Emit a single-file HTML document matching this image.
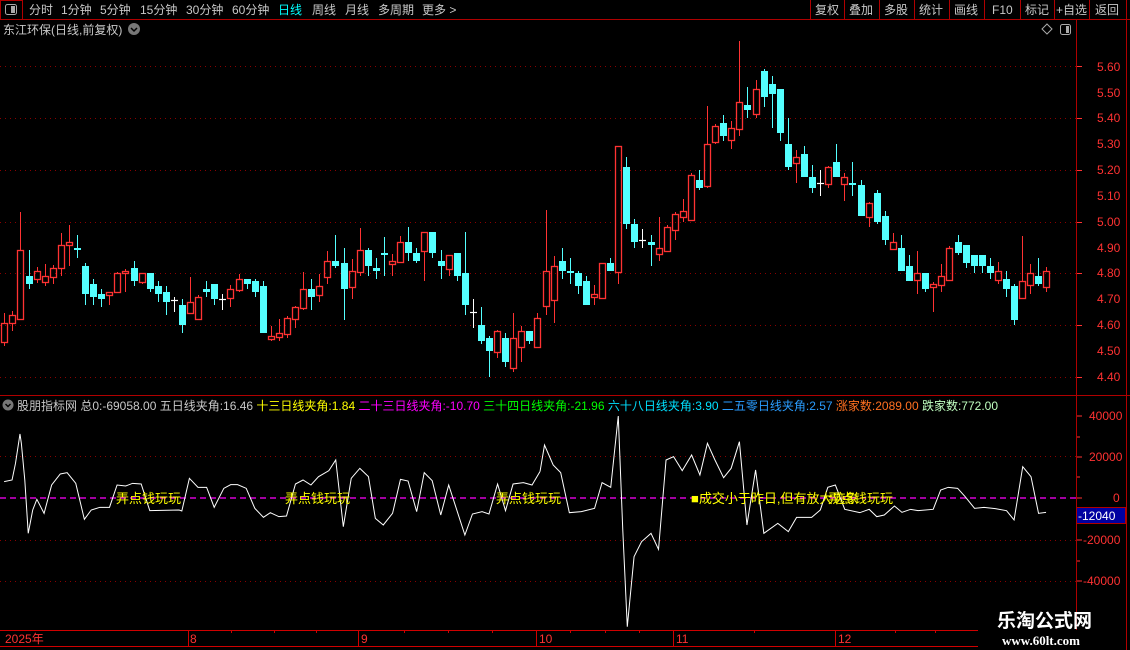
<!DOCTYPE html>
<html><head><meta charset="utf-8">
<style>
html,body{margin:0;padding:0;background:#000;width:1130px;height:650px;overflow:hidden}
svg{display:block}
text{font-family:"Liberation Sans","Noto Sans CJK SC",sans-serif;font-size:12px}
</style></head>
<body>
<svg id="s" width="1130" height="650" viewBox="0 0 1130 650" xmlns="http://www.w3.org/2000/svg">
<rect width="1130" height="650" fill="#000"/>
<line x1="0" y1="19.5" x2="1130" y2="19.5" stroke="#b00000"/>
<rect x="0.5" y="0.5" width="22" height="19" fill="none" stroke="#b00000"/>
<rect x="5.5" y="4.5" width="11" height="10" rx="2" fill="none" stroke="#aaa"/>
<rect x="11" y="6" width="4" height="7" fill="#aaa"/>
<g fill="#c8c8c8">
<text x="29" y="14">分时</text><text x="61" y="14">1分钟</text><text x="100" y="14">5分钟</text>
<text x="140" y="14">15分钟</text><text x="186" y="14">30分钟</text><text x="232" y="14">60分钟</text>
<text x="278" y="14" fill="#00ffff">日线</text><text x="312" y="14">周线</text><text x="345" y="14">月线</text>
<text x="378" y="14">多周期</text><text x="422" y="14">更多 &gt;</text>
</g>
<g stroke="#b00000">
<line x1="810.5" y1="0" x2="810.5" y2="19"/><line x1="844.5" y1="0" x2="844.5" y2="19"/>
<line x1="879.5" y1="0" x2="879.5" y2="19"/><line x1="914.5" y1="0" x2="914.5" y2="19"/>
<line x1="949.5" y1="0" x2="949.5" y2="19"/><line x1="984.5" y1="0" x2="984.5" y2="19"/>
<line x1="1020.5" y1="0" x2="1020.5" y2="19"/><line x1="1054.5" y1="0" x2="1054.5" y2="19"/>
<line x1="1089.5" y1="0" x2="1089.5" y2="19"/><line x1="1126.5" y1="0" x2="1126.5" y2="650"/>
</g>
<g fill="#c8c8c8">
<text x="815" y="14">复权</text><text x="849" y="14">叠加</text><text x="884" y="14">多股</text>
<text x="919" y="14">统计</text><text x="954" y="14">画线</text><text x="992" y="14">F10</text>
<text x="1025" y="14">标记</text><text x="1056" y="14">+自选</text><text x="1095" y="14">返回</text>
</g>
<text x="3" y="34" fill="#c8c8c8">东江环保(日线,前复权)</text>
<circle cx="134" cy="29" r="6" fill="#777"/><path d="M131 28 L134 31 L137 28" stroke="#000" stroke-width="1.5" fill="none"/>
<path d="M1047 24 L1052 29 L1047 34 L1042 29 Z" fill="none" stroke="#aaa"/>
<rect x="1060.5" y="24.5" width="10" height="10" rx="2" fill="none" stroke="#aaa"/><rect x="1066" y="26" width="3" height="7" fill="#aaa"/>
<line x1="1076.5" y1="20" x2="1076.5" y2="630" stroke="#b00000"/>
<line x1="0" y1="395.5" x2="1130" y2="395.5" stroke="#b00000"/>
<g stroke="#8a0000" stroke-dasharray="1 4">
<line x1="0" y1="66.5" x2="1076" y2="66.5"/><line x1="0" y1="118.5" x2="1076" y2="118.5"/>
<line x1="0" y1="170.5" x2="1076" y2="170.5"/><line x1="0" y1="222.5" x2="1076" y2="222.5"/>
<line x1="0" y1="273.5" x2="1076" y2="273.5"/><line x1="0" y1="325.5" x2="1076" y2="325.5"/>
<line x1="0" y1="377.5" x2="1076" y2="377.5"/>
</g>
<g fill="#ff3232">
<text x="1097" y="71">5.60</text><text x="1097" y="97">5.50</text><text x="1097" y="122">5.40</text>
<text x="1097" y="148">5.30</text><text x="1097" y="174">5.20</text><text x="1097" y="200">5.10</text>
<text x="1097" y="226">5.00</text><text x="1097" y="252">4.90</text><text x="1097" y="277">4.80</text>
<text x="1097" y="303">4.70</text><text x="1097" y="329">4.60</text><text x="1097" y="355">4.50</text>
<text x="1097" y="381">4.40</text>
</g>
<g stroke="#ff3232">
<line x1="1077" y1="66.5" x2="1082" y2="66.5"/><line x1="1077" y1="118.5" x2="1082" y2="118.5"/>
<line x1="1077" y1="170.5" x2="1082" y2="170.5"/><line x1="1077" y1="222.5" x2="1082" y2="222.5"/>
<line x1="1077" y1="273.5" x2="1082" y2="273.5"/><line x1="1077" y1="325.5" x2="1082" y2="325.5"/>
<line x1="1077" y1="377.5" x2="1082" y2="377.5"/>
</g>
<g id="candles"></g>
<circle cx="8" cy="405" r="5.5" fill="#777"/><path d="M5.5 404 L8 406.5 L10.5 404" stroke="#000" stroke-width="1.4" fill="none"/>
<text x="17" y="410" fill="#c8c8c8">股朋指标网 总0:-69058.00 五日线夹角:16.46 <tspan fill="#ffff00">十三日线夹角:1.84 </tspan><tspan fill="#ff00ff">二十三日线夹角:-10.70 </tspan><tspan fill="#00ff00">三十四日线夹角:-21.96 </tspan><tspan fill="#00e0ff">六十八日线夹角:3.90 </tspan><tspan fill="#2a9dff">二五零日线夹角:2.57 </tspan><tspan fill="#ff7020">涨家数:2089.00 </tspan><tspan fill="#c0ffc0">跌家数:772.00</tspan></text>
<g stroke="#8a0000" stroke-dasharray="1 4">
<line x1="0" y1="456.5" x2="1076" y2="456.5"/><line x1="0" y1="540.5" x2="1076" y2="540.5"/>
<line x1="0" y1="581.5" x2="1076" y2="581.5"/>
</g>
<line x1="0" y1="498" x2="1076" y2="498" stroke="#ff00ff" stroke-dasharray="6 4" stroke-width="1.2"/>
<g fill="#ff3232">
<text x="1089" y="420">40000</text><text x="1089" y="461">20000</text><text x="1113" y="502">0</text>
<text x="1083" y="544">-20000</text><text x="1083" y="585">-40000</text>
</g>
<g stroke="#ff3232">
<line x1="1077" y1="416" x2="1082" y2="416"/><line x1="1077" y1="437" x2="1080" y2="437"/><line x1="1077" y1="457" x2="1082" y2="457"/>
<line x1="1077" y1="477" x2="1080" y2="477"/><line x1="1077" y1="498" x2="1082" y2="498"/><line x1="1077" y1="519" x2="1080" y2="519"/>
<line x1="1077" y1="540" x2="1082" y2="540"/><line x1="1077" y1="561" x2="1080" y2="561"/><line x1="1077" y1="581" x2="1082" y2="581"/>
</g>
<rect x="1076.5" y="507.5" width="49" height="16" fill="#0000a0" stroke="#b00000"/>
<text x="1078" y="520" fill="#fff">-12040</text>
<g fill="none" stroke="#fff" stroke-width="1">
<polyline transform="translate(0,410) scale(0.34435,0.33333)" vector-effect="non-scaling-stroke" points="12,215 35,210 45,160 58,72 62,100 72,210 82,370 95,300 107,268 128,310 150,225 175,192 195,188 220,220 245,328 265,300 290,292 318,292 340,225 365,228 385,220 410,222 435,302 520,300 528,303 550,205 575,232 600,232 622,292 650,235 670,224 690,224 715,235 740,295 765,322 785,308 810,320 832,318 858,222 880,210 903,225 925,200 955,182 975,150 997,350 1020,205 1045,175 1070,200 1090,325 1113,345 1140,310 1163,208 1185,213 1210,305 1232,188 1255,212 1280,315 1303,225 1350,375 1372,312 1400,305 1420,312 1445,222 1468,302 1490,222 1520,218 1545,225 1568,185"/>
<polyline transform="translate(540,410) scale(0.37625,0.33333)" vector-effect="non-scaling-stroke" points="0,185 12,105 35,165 55,188 78,308 110,305 145,295 165,218 188,232 208,18 220,360 232,650 250,440 270,395 295,370 315,418 335,150 355,140 378,182 403,135 425,195 445,100 465,150 488,203 508,175 530,95 550,345 573,180 595,370 632,340 660,365 682,322 722,322 745,300 765,232 785,225 810,298 850,308 875,298 895,320 915,315 942,288 962,307 985,298 1005,302 1045,298 1065,240 1085,232 1110,235 1130,260 1155,295 1180,292 1210,296 1240,302 1260,330 1283,170 1305,200 1325,310 1345,307"/>
</g>
<g fill="#ffff00">
<text x="116" y="503" style="font-size:13px">弄点钱玩玩</text>
<text x="285" y="503" style="font-size:13px">弄点钱玩玩</text>
<text x="496" y="503" style="font-size:13px">弄点钱玩玩</text>
<text x="691" y="503" style="font-size:13px">■成交小于昨日,但有放大迹象</text>
<text x="828" y="503" style="font-size:13px">弄点钱玩玩</text>
</g>
<line x1="0" y1="630.5" x2="978" y2="630.5" stroke="#d00000"/>
<line x1="0" y1="646.5" x2="978" y2="646.5" stroke="#d00000"/>
<g stroke="#d00000">
<line x1="188.5" y1="630" x2="188.5" y2="646"/><line x1="358.5" y1="630" x2="358.5" y2="646"/>
<line x1="536.5" y1="630" x2="536.5" y2="646"/><line x1="673.5" y1="630" x2="673.5" y2="646"/>
<line x1="835.5" y1="630" x2="835.5" y2="646"/>
<line x1="231.5" y1="630" x2="231.5" y2="633"/><line x1="274.5" y1="630" x2="274.5" y2="633"/><line x1="316.5" y1="630" x2="316.5" y2="633"/>
<line x1="404.5" y1="630" x2="404.5" y2="633"/><line x1="448.5" y1="630" x2="448.5" y2="633"/><line x1="492.5" y1="630" x2="492.5" y2="633"/>
<line x1="570.5" y1="630" x2="570.5" y2="633"/><line x1="605.5" y1="630" x2="605.5" y2="633"/><line x1="639.5" y1="630" x2="639.5" y2="633"/>
<line x1="754.5" y1="630" x2="754.5" y2="633"/><line x1="895.5" y1="630" x2="895.5" y2="633"/><line x1="935.5" y1="630" x2="935.5" y2="633"/>
</g>
<g fill="#ff3232">
<text x="5" y="643">2025年</text><text x="190" y="643">8</text><text x="361" y="643">9</text>
<text x="539" y="643">10</text><text x="676" y="643">11</text><text x="838" y="643">12</text>
</g>
<text x="997" y="627" fill="#fff" style="font-size:19px;font-weight:bold;font-family:'Liberation Sans','Noto Sans CJK SC',sans-serif">乐淘公式网</text>
<text x="1002" y="645" fill="#fff" style="font-size:13px;font-weight:bold;font-family:'Liberation Serif',serif">www.60lt.com</text>
</svg>
<script>
(function(){
var d=[
"r323,342,313,346","r315,323,311,331","r250,319,212,320","c276,284,250,289","r271,279,267,283","r276,282,264,286","r268,277,265,284","r245,268,233,276","r242,245,225,266","c248,250,235,258",
"c266,294,263,305","c284,297,279,305","c294,299,289,307","r292,295,292,305","r273,292,272,292","r271,273,269,292","c268,281,261,286","r273,282,273,284","c273,289,273,292","c286,294,281,302",
"c292,302,286,315","w300,300,297,312","c305,325,299,333","r302,313,277,313","r297,319,295,320","c289,292,281,297","c284,299,284,305","w299,299,294,310","r289,298,285,307","r279,290,274,292",
"c279,284,279,289","c281,292,279,297","c286,333,281,333","r336,339,326,341","r333,337,319,341","r318,334,316,338","r307,319,306,328","r289,308,272,310","c289,297,279,310","r286,295,274,302",
"r261,277,251,284","c261,266,235,268","c263,289,248,320","r271,287,259,299","r250,272,228,276","c250,266,248,276","c268,271,258,279","c253,255,237,276","r261,264,254,276","r242,262,236,263",
"c242,253,227,261","c253,261,248,263","r232,251,232,281","c232,253,232,258","c261,266,250,279","r255,269,255,276","c253,276,253,281","c273,305,232,315","w312,312,299,328","c325,341,307,344",
"c338,351,336,377","r331,352,330,358","c338,362,333,367","r338,368,313,372","r331,347,326,362","c331,341,331,344","r318,347,313,347","r271,306,210,315","r266,300,256,323","c261,271,248,279",
"c271,273,258,284","c273,286,271,294","c281,305,276,305","r294,297,285,305","r263,298,263,298","c263,271,258,271","r146,272,146,284","c167,224,157,229","c224,242,219,248","w240,240,229,248",
"c242,245,235,266","r248,254,217,261","r227,251,225,251","r214,230,212,240","r211,217,199,222","r175,220,173,220","c180,188,170,190","r144,186,106,188","r126,142,124,144","c123,136,115,141",
"r128,140,121,149","r102,129,41,136","c105,110,87,118","r89,114,80,118","c71,97,69,107","c84,94,76,128","c89,133,89,141","c144,167,118,170","r157,163,150,183","c154,177,146,177",
"c177,188,165,193","w183,183,170,196","r167,184,166,188","c162,177,144,177","r177,184,173,201","c183,185,162,196","c185,216,180,216","r203,217,202,227","c193,222,190,224","c216,240,211,245",
"r242,249,233,249","c248,271,235,271","c266,281,255,281","r273,280,251,294","c273,289,273,292","r284,287,282,312","r276,285,264,292","r248,280,246,280","c242,253,235,255","c245,263,245,268",
"c255,266,255,273","c255,266,255,273","c266,273,258,279","r271,280,262,284","c279,289,271,297","c286,320,284,325","r281,298,236,298","r273,285,264,294","c276,284,258,286","r271,287,267,292"];
var g=document.getElementById('candles'),h='';
for(var i=0;i<d.length;i++){var t=d[i].charAt(0),v=d[i].slice(1).split(',').map(Number);
var x=Math.round(4.3+8.078*i),bt=v[0],bb=v[1],hi=v[2],lo=v[3],c;
if(t=='r'){c='#ff3232';
if(hi<bt)h+='<line x1="'+(x+.5)+'" y1="'+hi+'" x2="'+(x+.5)+'" y2="'+bt+'" stroke="'+c+'"/>';
if(lo>bb)h+='<line x1="'+(x+.5)+'" y1="'+bb+'" x2="'+(x+.5)+'" y2="'+lo+'" stroke="'+c+'"/>';
h+='<rect x="'+(x-2.5)+'" y="'+(bt+.5)+'" width="6" height="'+Math.max(bb-bt,2)+'" fill="none" stroke="'+c+'" stroke-width="1.3"/>';}
else if(t=='c'){c='#54ffff';
h+='<line x1="'+(x+.5)+'" y1="'+hi+'" x2="'+(x+.5)+'" y2="'+lo+'" stroke="'+c+'"/>';
h+='<rect x="'+(x-3)+'" y="'+bt+'" width="7" height="'+Math.max(bb-bt,2)+'" fill="'+c+'"/>';}
else{h+='<line x1="'+(x+.5)+'" y1="'+hi+'" x2="'+(x+.5)+'" y2="'+lo+'" stroke="#fff"/><line x1="'+(x-3)+'" y1="'+(bt+.5)+'" x2="'+(x+4)+'" y2="'+(bt+.5)+'" stroke="#fff" stroke-width="1.2"/>';}}
g.innerHTML=h;
})();
</script>
</body></html>
